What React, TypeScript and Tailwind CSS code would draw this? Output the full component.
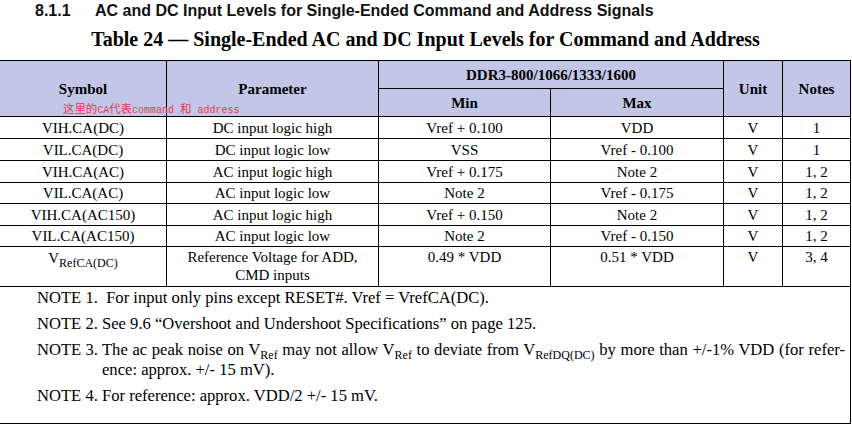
const serif = "font-['Liberation_Serif','Times_New_Roman',serif]"

const rows = [
  ["VIH.CA(DC)", "DC input logic high", "Vref + 0.100", "VDD", "V", "1"],
  ["VIL.CA(DC)", "DC input logic low", "VSS", "Vref - 0.100", "V", "1"],
  ["VIH.CA(AC)", "AC input logic high", "Vref + 0.175", "Note 2", "V", "1, 2"],
  ["VIL.CA(AC)", "AC input logic low", "Note 2", "Vref - 0.175", "V", "1, 2"],
  ["VIH.CA(AC150)", "AC input logic high", "Vref + 0.150", "Note 2", "V", "1, 2"],
  ["VIL.CA(AC150)", "AC input logic low", "Note 2", "Vref - 0.150", "V", "1, 2"],
]

const cell = "border-r border-b border-black flex items-center justify-center text-center"
const head = `${cell} bg-[#c2c7e7] font-bold`

function Sub({ children }: { children: React.ReactNode }) {
  return <span className="align-[-4px] text-[12px] leading-[0]">{children}</span>
}

export default function App() {
  return (
    <div className="w-[852px] h-[426px] bg-white text-black overflow-hidden">
      <h2 className="flex pl-[35px] pt-px h-[24px] text-[16px] leading-[20px] font-bold font-['Liberation_Sans',Arial,sans-serif] text-[#111]">
        <span className="w-[60px]">8.1.1</span>
        <span>AC and DC Input Levels for Single-Ended Command and Address Signals</span>
      </h2>
      <h3 className={`${serif} w-[851px] text-center font-bold text-[20px] leading-[26px] h-[36px] pt-[2px]`}>
        Table 24 — Single-Ended AC and DC Input Levels for Command and Address
      </h3>

      <div className={`${serif} relative w-[851px] text-[15px] leading-[18px]`}>
        <div className="grid grid-cols-[167px_212px_172px_173px_59px_68px] grid-rows-[28px_28px_22px_22px_22px_21px_22px_21px_40px] border-t border-black">
          <div className={`${head} row-span-2`}>Symbol</div>
          <div className={`${head} row-span-2`}>Parameter</div>
          <div className={`${head} col-span-2`}>DDR3-800/1066/1333/1600</div>
          <div className={`${head} row-span-2`}>Unit</div>
          <div className={`${head} row-span-2`}>Notes</div>
          <div className={head}>Min</div>
          <div className={head}>Max</div>

          {rows.map((r, i) =>
            r.map((v, j) => (
              <div key={`${i}-${j}`} className={cell}>
                {v}
              </div>
            ))
          )}

          <div className={`${cell} !items-start pt-[2px]`}>
            <span>
              V<Sub>RefCA(DC)</Sub>
            </span>
          </div>
          <div className={`${cell} !items-start pt-px`}>
            Reference Voltage for ADD,
            <br />
            CMD inputs
          </div>
          <div className={`${cell} !items-start pt-px`}>0.49 * VDD</div>
          <div className={`${cell} !items-start pt-px`}>0.51 * VDD</div>
          <div className={`${cell} !items-start pt-px`}>V</div>
          <div className={`${cell} !items-start pt-px`}>3, 4</div>
        </div>

        <span className="absolute left-[63px] top-[40px] leading-[16px] text-[#e8384f] whitespace-pre">
          <span className="text-[11.4px] font-['Noto_Sans_CJK_SC',sans-serif]">这里的</span>
          <span className="text-[10px] font-['Liberation_Mono',monospace]">CA</span>
          <span className="text-[11.4px] font-['Noto_Sans_CJK_SC',sans-serif]">代表</span>
          <span className="text-[10px] font-['Liberation_Mono',monospace]">command </span>
          <span className="text-[11.4px] font-['Noto_Sans_CJK_SC',sans-serif]">和</span>
          <span className="text-[10px] font-['Liberation_Mono',monospace]"> address</span>
        </span>

        <div className="flex flex-col gap-[7px] h-[137px] border-r border-b border-black pt-px pl-[37px] pr-[5px] text-[16.6px] leading-[19px]">
          <p>NOTE 1.&nbsp; For input only pins except RESET#. Vref = VrefCA(DC).</p>
          <p>NOTE 2. See 9.6 “Overshoot and Undershoot Specifications” on page 125.</p>
          <div className="flex">
            <span className="shrink-0 whitespace-pre">NOTE 3. </span>
            <div className="flex-1">
              <p className="text-justify [text-align-last:justify] whitespace-nowrap">
                The ac peak noise on V<Sub>Ref</Sub> may not allow V<Sub>Ref</Sub> to deviate from V<Sub>RefDQ(DC)</Sub> by more than +/-1% VDD (for refer-
              </p>
              <p className="pt-px">ence: approx. +/- 15 mV).</p>
            </div>
          </div>
          <p>NOTE 4. For reference: approx. VDD/2 +/- 15 mV.</p>
        </div>
      </div>
    </div>
  )
}
